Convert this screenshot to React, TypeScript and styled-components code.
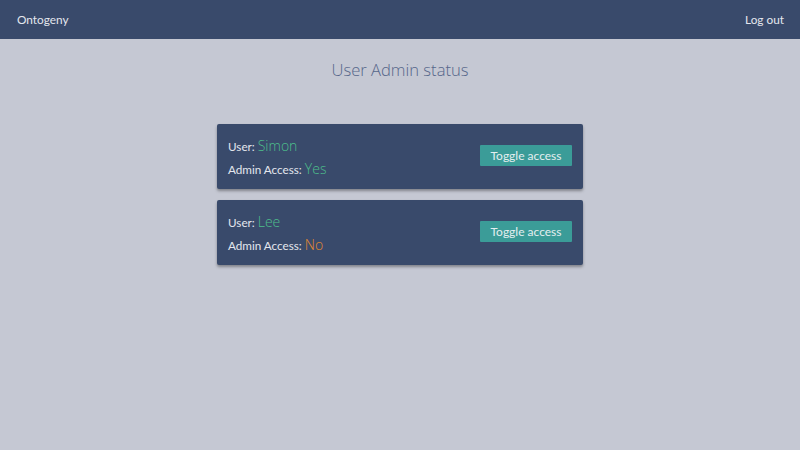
import styled, { createGlobalStyle } from 'styled-components';

const GlobalStyle = createGlobalStyle`
  html, body {
    margin: 0;
    padding: 0;
    background-color: #c5c8d3;
    font-family: Lato, "Open Sans", sans-serif;
  }
`;

const Page = styled.div`
  min-height: 450px;
  background-color: #c5c8d3;
`;

const Nav = styled.nav`
  display: flex;
  justify-content: space-between;
  align-items: center;
  height: 39px;
  padding: 0 16px 0 17px;
  background-color: #394a6b;
  color: #e4e7ee;
  font-family: Lato, sans-serif;
  font-size: 11.8px;
`;

const NavLink = styled.a`
  color: #e4e7ee;
  text-decoration: none;
  cursor: pointer;
`;

const Title = styled.h1`
  margin: 0;
  padding-top: 19px;
  text-align: center;
  font-family: "Open Sans", sans-serif;
  font-weight: 300;
  font-size: 16.6px;
  color: #56668a;
`;

const List = styled.div`
  display: flex;
  flex-direction: column;
  align-items: center;
  gap: 11px;
  margin-top: 43px;
`;

const Card = styled.div`
  box-sizing: border-box;
  width: 366px;
  height: 65px;
  display: flex;
  justify-content: space-between;
  align-items: center;
  padding: 0 11px 0 11px;
  background-color: #394a6b;
  border-radius: 2px;
  box-shadow: 0 2px 3px rgba(0, 0, 0, 0.35);
`;

const Info = styled.div`
  display: flex;
  flex-direction: column;
  gap: 3px;
  padding-top: 1px;
`;

const Line = styled.div`
  font-family: Lato, sans-serif;
  font-size: 11.7px;
  color: #e4e7ee;
  line-height: 19px;
`;

const Value = styled.span<{ $color: string }>`
  font-family: "Open Sans", sans-serif;
  font-weight: 300;
  font-size: 14px;
  color: ${p => p.$color};
`;

const ToggleButton = styled.button`
  width: 92px;
  height: 21px;
  border: none;
  border-radius: 1px;
  background-color: #3b9c98;
  color: #e4eef0;
  font-family: Lato, sans-serif;
  font-size: 12px;
  padding: 0;
  margin-bottom: 2px;
  cursor: pointer;
`;

const users = [
  { name: 'Simon', admin: true },
  { name: 'Lee', admin: false },
];

export default function App() {
  return (
    <Page>
      <GlobalStyle />
      <Nav>
        <NavLink>Ontogeny</NavLink>
        <NavLink>Log out</NavLink>
      </Nav>
      <Title>User Admin status</Title>
      <List>
        {users.map(u => (
          <Card key={u.name}>
            <Info>
              <Line>
                User: <Value $color="#4dbf8c">{u.name}</Value>
              </Line>
              <Line>
                Admin Access:{' '}
                <Value $color={u.admin ? '#4dbf8c' : '#e3892f'}>{u.admin ? 'Yes' : 'No'}</Value>
              </Line>
            </Info>
            <ToggleButton>Toggle access</ToggleButton>
          </Card>
        ))}
      </List>
    </Page>
  );
}
